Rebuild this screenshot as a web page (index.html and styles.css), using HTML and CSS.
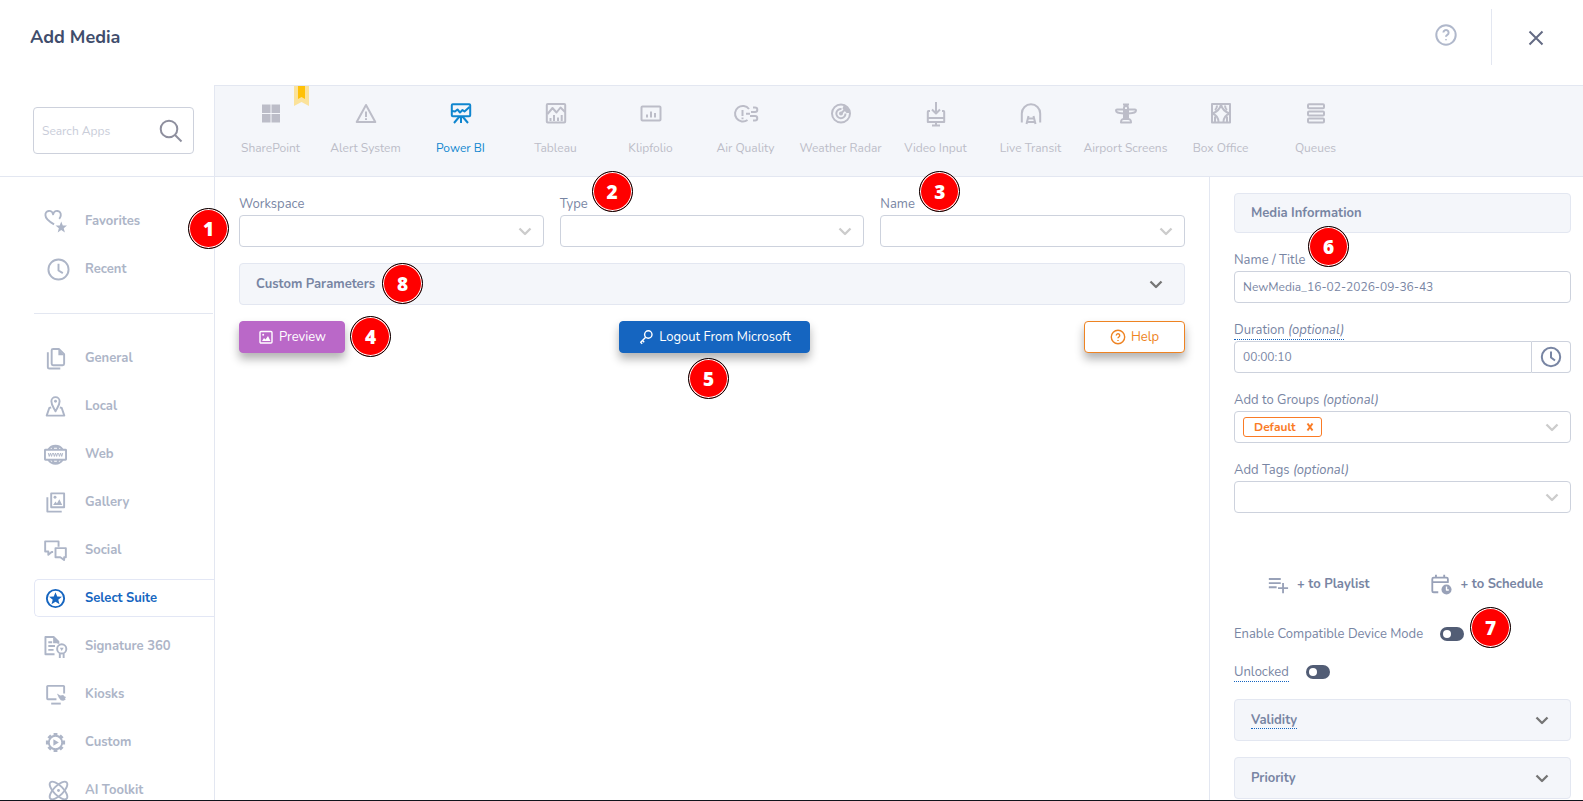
FILE: index.html
```html
<!DOCTYPE html>
<html lang="en">
<head>
<meta charset="UTF-8">
<title>Add Media</title>
<meta name="viewport" content="width=device-width, initial-scale=1.0">
<link rel="stylesheet" href="styles.css">
</head>
<body>

	<header class="header">
		<h1 class="title">Add Media</h1>
		<button type="button" class="icon-btn help-btn" aria-label="Help">
			<svg class="icon" viewBox="0 0 24 24"><circle cx="12" cy="12" r="9.7"/><path d="M9.4 9.6a2.6 2.6 0 1 1 3.9 2.3c-.9.5-1.3.9-1.3 1.9"/><path d="M12 16.2v1"/></svg>
		</button>
		<button type="button" class="icon-btn close-btn" aria-label="Close">
			<svg class="icon" viewBox="0 0 24 24"><path d="M5.5 5.5l13 13M18.5 5.5l-13 13"/></svg>
		</button>
	</header>

	<div class="layout">

		<aside class="sidebar">
			<div class="search">
				<input type="text" class="search-input" placeholder="Search Apps" aria-label="Search Apps">
				<svg class="icon search-icon" viewBox="0 0 24 24"><circle cx="10" cy="10" r="8.3"/><path d="M16 16l6.5 6.5"/></svg>
			</div>

			<nav class="menu">
				<a href="#" class="menu-item">
					<svg class="icon" viewBox="0 0 24 24"><path d="M10.500 15C7 13 1.500 9.500 1.500 5.500a4 4 0 0 1 8-1 4 4 0 0 1 8 1c0 1.500-.6 2.700-1.600 3.800"/><path class="fill" d="M18 12l1.600 4.200 4.400.1-3.400 2.800 1.200 4.300-3.800-2.500-3.700 2.500 1.200-4.300-3.500-2.800 4.400-.1z"/></svg>
					Favorites
				</a>
				<a href="#" class="menu-item">
					<svg class="icon shifted" viewBox="0 0 24 24"><circle cx="12" cy="12" r="10.500"/><path d="M12 6v7l4.500 2.800"/></svg>
					Recent
				</a>
				<hr class="divider">
				<a href="#" class="menu-item">
					<svg class="icon" viewBox="0 0 24 24"><path d="M9.500 2h6l5.500 5.500v10a1.500 1.500 0 0 1-1.500 1.500h-10A1.500 1.500 0 0 1 8 17.500v-14A1.500 1.500 0 0 1 9.500 2z"/><path class="fill" d="M15 2l6 6.500h-6z"/><path d="M4 5.500V21a1.500 1.500 0 0 0 1.500 1.500H17"/></svg>
					General
				</a>
				<a href="#" class="menu-item">
					<svg class="icon" viewBox="0 0 24 24"><path d="M12 17C10 13 7.700 10.500 7.700 6.500a4.300 4.300 0 0 1 8.600 0c0 4-2.300 6.500-4.300 10.500z"/><circle class="fill" cx="12" cy="6.500" r="1.500"/><path d="M7.500 13l-2 .5L2.800 21.500h18.400l-2.700-8-2-.5"/></svg>
					Local
				</a>
				<a href="#" class="menu-item">
					<svg class="icon" viewBox="0 0 24 24"><path d="M4.500 7a8.800 8.800 0 0 1 15 0M4.500 17.500a8.800 8.800 0 0 0 15 0M9 7l1-3.500M15 7l-1-3.500M9 17.500l1 3M15 17.500l-1 3M8 4h8M8 20.500h8"/><rect x="1" y="7" width="22" height="10.500" rx=".5"/><path class="thin" d="M4.500 10.500l1 3.500 1.200-3.500 1.200 3.500 1-3.500M9.800 10.500l1 3.500L12 10.500l1.200 3.500 1-3.500M15.100 10.500l1 3.500 1.200-3.500 1.200 3.500 1-3.500"/></svg>
					Web
				</a>
				<a href="#" class="menu-item">
					<svg class="icon" viewBox="0 0 24 24"><rect x="7.500" y="2.500" width="13.500" height="14.500"/><path d="M3.500 6.500V21.500h15"/><circle class="fill" cx="11.500" cy="6.500" r="1.500"/><path class="fill" d="M9.500 14.500l2.500-3.500 1.500 2 2.500-4.500 3 6z"/></svg>
					Gallery
				</a>
				<a href="#" class="menu-item">
					<svg class="icon" viewBox="0 0 24 24"><path d="M9.500 13.500H8l-3.500 3V13H1.200V2.500h14V8"/><path d="M12 9.500h10.800V19H21v3l-4-3h-5z"/></svg>
					Social
				</a>
				<a href="#" class="menu-item active">
					<svg class="icon" viewBox="0 0 24 24"><circle cx="12" cy="12" r="9"/><path class="fill" d="M12 5.500l1.800 4.500 4.900.3-3.800 3.100 1.300 4.700-4.200-2.600-4.200 2.600 1.300-4.700-3.800-3.100 4.900-.3z"/></svg>
					Select Suite
				</a>
				<a href="#" class="menu-item">
					<svg class="icon" viewBox="0 0 24 24"><path d="M11 20H1.500V2H10l5 5v2M4.500 7.500h4M4.500 11.500h7M4.500 15.500h5.500"/><path class="fill" d="M9.500 2l6 6.500h-6z"/><circle cx="18.500" cy="14.500" r="4.800"/><path class="fill" d="M16.500 13.300h4l-2 3.500z"/><path d="M16.500 19v5M20.500 19v5"/></svg>
					Signature 360
				</a>
				<a href="#" class="menu-item">
					<svg class="icon" viewBox="0 0 24 24"><path d="M13 17H4a.7.7 0 0 1-.7-.7V3.700A.7.7 0 0 1 4 3h16.300a.7.700 0 0 1 .7.700V11"/><path d="M7.500 21.500h10"/><path class="fill" d="M13.500 11l3.500 2 3-.5 1.500 1.500 1.500.5-1 1.500.5 1.500-2.500 1-2.500-.5-2-2.500z"/></svg>
					Kiosks
				</a>
				<a href="#" class="menu-item">
					<svg class="icon" viewBox="0 0 24 24"><circle cx="12" cy="12" r="7"/><path class="fill" d="M9.800 8.500L15.500 12l-5.700 3.500z"/><path class="teeth" d="M12 2v3M12 19v3M2 12h3M19 12h3M5 5l2 2M17 17l2 2M19 5l-2 2M7 17l-2 2"/></svg>
					Custom
				</a>
				<a href="#" class="menu-item">
					<svg class="icon shifted" viewBox="0 0 24 24"><ellipse cx="12" cy="12" rx="5" ry="12" transform="rotate(45 12 12)"/><ellipse cx="12" cy="12" rx="5" ry="12" transform="rotate(-45 12 12)"/><circle class="fill" cx="12" cy="12" r="1.500"/></svg>
					AI Toolkit
				</a>
			</nav>
		</aside>

		<div class="content">

			<nav class="apps">
				<a href="#" class="app">
					<svg class="icon" viewBox="0 0 24 24"><path class="fill" d="M3 3.500h8.500V12H3zM12.500 3.500H21V12h-8.500zM3 13h8.500v8.500H3zM12.500 13H21v8.500h-8.500z"/></svg>
					SharePoint
					<svg class="ribbon" viewBox="0 0 15 20"><path fill="#fbe29a" d="M0 0h15v20l-7.500-4L0 20z"/><path fill="#ffc107" d="M4 0h7v13l-3.500-2L4 13z"/></svg>
				</a>
				<a href="#" class="app">
					<svg class="icon" viewBox="0 0 24 24"><path d="M12 4L21.300 21H2.700z"/><path d="M12 10.500v5.500M12 17.200v1.800"/></svg>
					Alert System
				</a>
				<a href="#" class="app active">
					<svg class="icon" viewBox="0 0 24 24"><rect x="2.800" y="3.300" width="18.400" height="12" rx="1"/><path d="M3 10l3 .5 2.500-2 2.500 3 2.500-2.500 2 1.500L20.500 6M12 15v7M10.500 15.500L5 22M13.500 15.500L19 22"/></svg>
					Power BI
				</a>
				<a href="#" class="app">
					<svg class="icon" viewBox="0 0 24 24"><rect x="2.800" y="3" width="18.400" height="18.400" rx="1"/><path d="M3.500 13l5-6 4 4.500 4-5L21 11M6.500 17v3M10 14v6M14 16.500v3.500M17.700 14v6"/></svg>
					Tableau
				</a>
				<a href="#" class="app">
					<svg class="icon" viewBox="0 0 24 24"><rect x="2.500" y="5.500" width="19" height="14" rx="1"/><path d="M8 13.500v3M12 10.500v6M16 12v4.500"/></svg>
					Klipfolio
				</a>
				<a href="#" class="app">
					<svg class="icon" viewBox="0 0 24 24"><path d="M15 8A7.800 7.800 0 1 0 13.500 19"/><path d="M8.500 9v6M8.500 16.500v1.700M19 6.500h2a2.300 2.300 0 0 1 0 4.600h-4M16 15h5a2.200 2.200 0 0 1 0 4.500h-2M12 12.800h4"/></svg>
					Air Quality
				</a>
				<a href="#" class="app">
					<svg class="icon" viewBox="0 0 24 24"><circle cx="12" cy="12.500" r="9"/><path d="M12.500 8a4.600 4.600 0 1 0 4 4.500M12 12.500l4-4"/><circle cx="12" cy="12.500" r="1"/><path class="fill" d="M15 3.500l5.500 5.500.5 3h-3.500l-4-4.500z"/></svg>
					Weather Radar
				</a>
				<a href="#" class="app">
					<svg class="icon" viewBox="0 0 24 24"><path d="M12 1v11M8 8.500l4 4 4-4M6 10H4.500a.7.7 0 0 0-.7.7V21h16.400V10.700a.7.7 0 0 0-.7-.7H18M4 17h16M12 21v4M8 24.500h8"/></svg>
					Video Input
				</a>
				<a href="#" class="app">
					<svg class="icon" viewBox="0 0 24 24"><path d="M2.800 21.500V12.500a9.200 9.200 0 0 1 18.400 0v9M7.500 23l2-8M16.500 23l-2-8M9 17.500h6M8 21h8"/></svg>
					Live Transit
				</a>
				<a href="#" class="app">
					<svg class="icon" viewBox="0 0 24 24"><path d="M9 3.500h6M12 3v2M10 18.500V7a2 2 0 0 1 4 0v11.500M10 8.500H3a1 1 0 0 0-1 1c0 2 1.500 2.500 8 3M14 8.500h7a1 1 0 0 1 1 1c0 2-1.500 2.500-8 3M12 8v9M9.500 18h5c2 .5 2.500 1 2.500 3.500H7c0-2.500.5-3 2.500-3.500z"/></svg>
					Airport Screens
				</a>
				<a href="#" class="app">
					<svg class="icon" viewBox="0 0 24 24"><rect x="3" y="3" width="18" height="18.500"/><path d="M12 3.500C11 8 7.500 11 3.500 12.500 7 14 9.500 17 9.500 21M12 3.500c1 4.500 4.500 7.500 8.500 9-3.500 1.500-6 4.500-6 8.500M8 4.500c0 2-.8 3.500-2 4.500M16 4.500c0 2 .8 3.500 2 4.500M6 15.500v5.500M18 15.500v5.500"/></svg>
					Box Office
				</a>
				<a href="#" class="app">
					<svg class="icon" viewBox="0 0 24 24"><rect x="4" y="3.200" width="16" height="4" rx="1"/><rect x="4" y="10.400" width="16" height="4" rx="1"/><rect x="4" y="17.600" width="16" height="4" rx="1"/></svg>
					Queues
				</a>
			</nav>

			<div class="panels">

				<main class="main">
					<div class="fields">
						<div class="field">
							<label for="workspace">Workspace</label>
							<div class="select-wrap">
								<select id="workspace" class="control"><option></option></select>
								<svg class="icon chevron" viewBox="0 0 24 24"><path d="M6.500 9.500L12 15l5.500-5.500"/></svg>
							</div>
							<span class="callout callout-1">1</span>
						</div>
						<div class="field">
							<label for="type">Type</label>
							<div class="select-wrap">
								<select id="type" class="control"><option></option></select>
								<svg class="icon chevron" viewBox="0 0 24 24"><path d="M6.500 9.500L12 15l5.500-5.500"/></svg>
							</div>
							<span class="callout callout-2">2</span>
						</div>
						<div class="field">
							<label for="name">Name</label>
							<div class="select-wrap">
								<select id="name" class="control"><option></option></select>
								<svg class="icon chevron" viewBox="0 0 24 24"><path d="M6.500 9.500L12 15l5.500-5.500"/></svg>
							</div>
							<span class="callout callout-3">3</span>
						</div>
					</div>

					<div class="accordion-wrap">
						<button type="button" class="accordion">
							<span>Custom Parameters</span>
							<svg class="icon" viewBox="0 0 24 24"><path d="M6.500 9.500L12 15l5.500-5.500"/></svg>
						</button>
						<span class="callout callout-8">8</span>
					</div>

					<div class="actions">
						<div class="action">
							<button type="button" class="btn btn-preview">
								<svg class="icon" viewBox="0 0 16 16"><rect x="2" y="2.500" width="12" height="11.500" rx="1"/><circle class="fill" cx="5.200" cy="5.700" r="1"/><path class="fill" d="M4 12l2-3 1.500 1.500L10 7l2.500 5z"/></svg>
								Preview
							</button>
							<span class="callout callout-4">4</span>
						</div>
						<div class="action">
							<button type="button" class="btn btn-logout">
								<svg class="icon" viewBox="0 0 16 16"><circle cx="10.300" cy="5.500" r="3.700"/><path d="M7.700 8.200l-5 5 1.500 1.500M4.500 11.500L6.200 13.200"/></svg>
								Logout From Microsoft
							</button>
							<span class="callout callout-5">5</span>
						</div>
						<div class="action">
							<button type="button" class="btn btn-help">
								<svg class="icon" viewBox="0 0 16 16"><circle cx="8" cy="8" r="6.700"/><path d="M6.300 6.500a1.700 1.700 0 1 1 2.700 1.300c-.7.400-1 .7-1 1.400M8 11v.9"/></svg>
								Help
							</button>
						</div>
					</div>
				</main>

				<section class="info">
					<div class="info-head">
						<h2 class="info-title">Media Information</h2>
						<span class="callout callout-6">6</span>
					</div>

					<div class="field">
						<label for="media-title">Name / Title</label>
						<input type="text" id="media-title" class="control" value="NewMedia_16-02-2026-09-36-43">
					</div>

					<div class="field">
						<label for="duration"><span class="hint">Duration <em>(optional)</em></span></label>
						<div class="time-group">
							<input type="text" id="duration" class="control" value="00:00:10">
							<button type="button" class="time-btn" aria-label="Pick duration">
								<svg class="icon" viewBox="0 0 24 24"><circle cx="12" cy="12" r="9.200"/><path d="M12 6.500V12.500l4 3"/></svg>
							</button>
						</div>
					</div>

					<div class="field">
						<label for="groups">Add to Groups <em>(optional)</em></label>
						<div class="select-wrap">
							<select id="groups" class="control"><option></option></select>
							<button type="button" class="chip">Default
								<svg class="icon" viewBox="0 0 8 8"><path d="M1.500 .5l5 7M6.500 .5l-5 7"/></svg>
							</button>
							<svg class="icon chevron" viewBox="0 0 24 24"><path d="M6.500 9.500L12 15l5.500-5.500"/></svg>
						</div>
					</div>

					<div class="field">
						<label for="tags">Add Tags <em>(optional)</em></label>
						<div class="select-wrap">
							<select id="tags" class="control"><option></option></select>
							<svg class="icon chevron" viewBox="0 0 24 24"><path d="M6.500 9.500L12 15l5.500-5.500"/></svg>
						</div>
					</div>

					<div class="links">
						<button type="button" class="link-btn">
							<svg class="icon" viewBox="0 0 24 24"><path d="M2 6.500h13M2 11h13M2 15.500h8.500M17.500 11v11M12 16.500h11"/></svg>
							+ to Playlist
						</button>
						<button type="button" class="link-btn">
							<svg class="icon" viewBox="0 0 24 24"><path d="M9 21H4a1.500 1.500 0 0 1-1.500-1.500v-13A1.500 1.500 0 0 1 4 5h14a1.500 1.500 0 0 1 1.500 1.500V10h-17M6.500 5V2M15.500 5V2"/><circle class="fill" cx="18" cy="18" r="5.500"/><path class="hand" d="M18 14.800v3.700h2.500"/></svg>
							+ to Schedule
						</button>
					</div>

					<div class="toggle-row">
						<label for="compat">Enable Compatible Device Mode</label>
						<input type="checkbox" id="compat" class="toggle">
						<span class="callout callout-7">7</span>
					</div>
					<div class="toggle-row">
						<label for="unlocked"><span class="hint">Unlocked</span></label>
						<input type="checkbox" id="unlocked" class="toggle">
					</div>

					<button type="button" class="accordion">
						<span class="hint">Validity</span>
						<svg class="icon" viewBox="0 0 24 24"><path d="M6.500 9.500L12 15l5.500-5.500"/></svg>
					</button>
					<button type="button" class="accordion">
						<span>Priority</span>
						<svg class="icon" viewBox="0 0 24 24"><path d="M6.500 9.500L12 15l5.500-5.500"/></svg>
					</button>
				</section>

			</div>
		</div>
	</div>

</body>
</html>
```
FILE: styles.css
```css
* {
	box-sizing: border-box;
}

body {
	margin: 0;
	height: 100vh;
	display: flex;
	flex-direction: column;
	overflow: hidden;
	border-bottom: 1px solid #10141c;
	background-color: #fff;
	color: #7885a3;
	font-family: Nunito, Lato, "Open Sans", sans-serif;
	font-size: 13px;
	line-height: 22px;
}

button,
input,
select {
	font: inherit;
	color: inherit;
}

button {
	padding: 0;
	border: 0;
	background: none;
	cursor: pointer;
}

a {
	color: inherit;
	text-decoration: none;
}

/* icons */
.icon {
	width: 24px;
	height: 24px;
	flex: none;
	overflow: visible;
	fill: none;
	stroke: currentColor;
	stroke-width: 2;
	stroke-linejoin: round;
}

.icon .fill {
	fill: currentColor;
	stroke: none;
}

.icon .thin {
	stroke-width: 1;
}

.icon .teeth {
	stroke-width: 4;
}

.icon .hand {
	stroke: #fff;
	stroke-width: 1.5;
}

/* header */
.header {
	height: 85px;
	flex: none;
	display: flex;
	align-items: flex-start;
	padding: 9px 4px 0 30px;
}

.title {
	flex: 1;
	margin: 0;
	color: #3f4d6c;
	font-size: 18px;
	font-weight: 700;
	line-height: 56px;
}

.icon-btn {
	height: 56px;
	display: flex;
	align-items: center;
	justify-content: center;
}

.help-btn {
	width: 90px;
	height: 52px;
	color: #b0b8cb;
}

.close-btn {
	width: 88px;
	padding-top: 2px;
	border-left: 1px solid #e3e7f1;
	color: #646b84;
}

.layout {
	flex: 1;
	min-height: 0;
	display: flex;
}

/* sidebar */
.sidebar {
	width: 214px;
	flex: none;
	overflow: hidden;
}

.search {
	position: relative;
	height: 92px;
	padding: 22px 20px 22px 33px;
	border-bottom: 1px solid #e3e7f1;
}

.search-input {
	width: 100%;
	height: 47px;
	padding: 0 40px 0 8px;
	border: 1px solid #cdd1dc;
	border-radius: 4px;
	font-size: 12px;
}

.search-input::placeholder {
	color: #c9cdd9;
}

.search-icon {
	position: absolute;
	right: 31px;
	top: 34px;
	color: #8e8f9e;
}

.menu {
	padding: 25px 0 0 34px;
}

.menu-item {
	height: 38px;
	margin: 0 0 10px;
	padding: 0 0 0 9px;
	display: flex;
	align-items: center;
	gap: 18px;
	border: 1px solid transparent;
	border-right: 0;
	border-radius: 5px 0 0 5px;
	color: #adb5c7;
	font-weight: 700;
}

.menu-item .icon {
	width: 23px;
	height: 23px;
}

.menu-item .shifted {
	margin-left: 3px;
	margin-right: -3px;
}

.menu-item.active {
	border-color: #e3e7f5;
	color: #1565c0;
}

.divider {
	height: 1px;
	margin: 25px 1px 25px 0;
	border: 0;
	background-color: #e3e7f1;
}

/* app bar */
.content {
	flex: 1;
	min-width: 0;
	display: flex;
	flex-direction: column;
	border: 1px solid #e3e7f1;
	border-width: 1px 0 0 1px;
}

.apps {
	height: 91px;
	flex: none;
	display: flex;
	padding-left: 8px;
	background-color: #f4f6fa;
	border-bottom: 1px solid #e3e7f1;
}

.app {
	position: relative;
	width: 95px;
	padding-top: 15px;
	display: flex;
	flex-direction: column;
	align-items: center;
	gap: 12px;
	color: #bcbdc8;
	font-size: 12px;
	white-space: nowrap;
}

.app.active {
	color: #0f86cf;
}

.ribbon {
	position: absolute;
	top: 0;
	right: 9px;
	width: 15px;
	height: 20px;
}

.panels {
	flex: 1;
	min-height: 0;
	display: flex;
}

/* form */
.main {
	flex: 1;
	min-width: 0;
	padding: 16px 24px;
}

.fields {
	display: grid;
	grid-template-columns: repeat(3, 1fr);
	gap: 16px;
}

.field {
	position: relative;
	margin-bottom: 16px;
}

.field label {
	display: block;
}

.control {
	display: block;
	width: 100%;
	height: 32px;
	padding: 0 8px;
	border: 1px solid #cdd2dd;
	border-radius: 4px;
	background-color: #fff;
	font-size: 12px;
	appearance: none;
}

.select-wrap {
	position: relative;
}

.chevron {
	position: absolute;
	top: 4px;
	right: 7px;
	color: #ccc;
	pointer-events: none;
}

.chevron,
.accordion .icon {
	stroke-width: 2.3;
}

.accordion-wrap {
	position: relative;
}

.accordion {
	width: 100%;
	height: 42px;
	margin-bottom: 16px;
	padding: 0 16px;
	display: flex;
	align-items: center;
	justify-content: space-between;
	border: 1px solid #e3e7f1;
	border-radius: 4px;
	background-color: #f4f6fa;
	font-weight: 700;
}

.accordion .icon {
	color: #757575;
}

.hint {
	border-bottom: 1px dotted #1565c0;
	line-height: 16px;
}

.actions {
	display: flex;
	justify-content: space-between;
}

.action {
	position: relative;
}

.btn {
	height: 32px;
	display: flex;
	align-items: center;
	justify-content: center;
	gap: 5px;
	border: 1px solid;
	border-radius: 4px;
	box-shadow: 0 6px 10px rgba(0, 0, 0, 0.3);
}

.btn .icon {
	width: 16px;
	height: 16px;
	stroke-width: 1.4;
}

.btn-preview {
	width: 106px;
	border-color: #ba68c8;
	background-color: #ba68c8;
	color: #fff;
}

.btn-logout {
	width: 191px;
	border-color: #1565c0;
	background-color: #1565c0;
	color: #fff;
}

.btn-help {
	width: 101px;
	border-color: #ee8322;
	background-color: #fff;
	color: #ee8322;
}

/* media information */
.info {
	width: 374px;
	flex: none;
	padding: 16px 12px 0 24px;
	border-left: 1px solid #e3e7f1;
	overflow: hidden;
}

.info-head {
	position: relative;
	margin-bottom: 16px;
}

.info-title {
	margin: 0;
	padding: 0 16px;
	border: 1px solid #e3e7f1;
	border-radius: 4px;
	background-color: #f4f6fa;
	font-size: 13px;
	line-height: 38px;
}

.time-group {
	display: flex;
}

.time-group .control {
	flex: 1;
	border-radius: 4px 0 0 4px;
}

.time-btn {
	width: 39px;
	display: flex;
	align-items: center;
	justify-content: center;
	border: 1px solid #cdd2dd;
	border-left: 0;
	border-radius: 0 4px 4px 0;
}

.chip {
	position: absolute;
	top: 6px;
	left: 9px;
	height: 20px;
	padding: 0 7px 0 10px;
	display: flex;
	align-items: center;
	gap: 10px;
	border: 1px solid #fa7b25;
	border-radius: 3px;
	color: #fa7b25;
	font-size: 12px;
	font-weight: 700;
}

.chip .icon {
	width: 8px;
	height: 8px;
}

.links {
	display: grid;
	grid-template-columns: 1fr 1fr;
	padding: 36px 0 20px;
}

.link-btn {
	height: 38px;
	display: flex;
	align-items: center;
	justify-content: center;
	gap: 8px;
	font-weight: 700;
}

.link-btn .icon {
	width: 22px;
	height: 22px;
	color: #98a1b8;
}

.toggle-row {
	position: relative;
	display: flex;
	align-items: center;
	gap: 17px;
	margin-bottom: 16px;
}

.toggle {
	width: 24px;
	height: 14px;
	margin: 0;
	padding: 3px;
	appearance: none;
	border-radius: 7px;
	background-color: #525d75;
}

.toggle::before {
	content: "";
	display: block;
	width: 8px;
	height: 8px;
	border-radius: 50%;
	background-color: #fff;
}

.toggle:checked::before {
	margin-left: auto;
}

/* numbered markers */
.callout {
	position: absolute;
	z-index: 1;
	width: 41px;
	height: 41px;
	border: 1px solid #000;
	border-radius: 50%;
	background-color: #f00;
	box-shadow: inset 0 0 0 1px #fff;
	color: #fff;
	font-family: "Open Sans", "Noto Sans", sans-serif;
	font-size: 19px;
	font-weight: 800;
	line-height: 40px;
	text-align: center;
}

.callout-1 {
	left: -51px;
	top: 15px;
}

.callout-2 {
	left: 32px;
	top: -22px;
}

.callout-3 {
	left: 39px;
	top: -22px;
}

.callout-4 {
	left: 111px;
	top: -5px;
}

.callout-5 {
	left: 69px;
	top: 37px;
}

.callout-6 {
	left: 74px;
	top: 33px;
}

.callout-7 {
	left: 236px;
	top: -16px;
}

.callout-8 {
	left: 143px;
	top: 0;
}
```
